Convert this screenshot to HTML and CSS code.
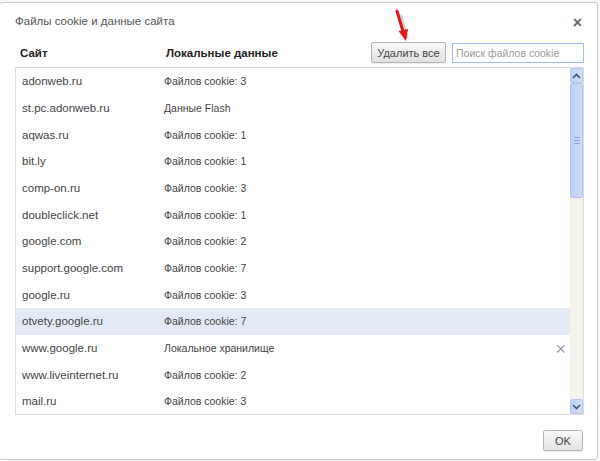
FILE: index.html
```html
<!DOCTYPE html>
<html lang="ru">
<head>
<meta charset="utf-8">
<link rel="stylesheet" href="styles.css">
</head>
<body>
<div class="dialog">
  <div class="titlebar">
    <span class="title">Файлы cookie и данные сайта</span>
    <span class="close">×</span>
  </div>
  <div class="toolbar">
    <span class="h-site">Сайт</span>
    <span class="h-data">Локальные данные</span>
    <button class="btn">Удалить все</button>
    <input class="search" type="text" placeholder="Поиск файлов cookie">
  </div>
  <div class="list">
    <div class="rows">
      <div class="row"><span class="c1">adonweb.ru</span><span class="c2">Файлов cookie: 3</span></div>
      <div class="row"><span class="c1">st.pc.adonweb.ru</span><span class="c2">Данные Flash</span></div>
      <div class="row"><span class="c1">aqwas.ru</span><span class="c2">Файлов cookie: 1</span></div>
      <div class="row"><span class="c1">bit.ly</span><span class="c2">Файлов cookie: 1</span></div>
      <div class="row"><span class="c1">comp-on.ru</span><span class="c2">Файлов cookie: 3</span></div>
      <div class="row"><span class="c1">doubleclick.net</span><span class="c2">Файлов cookie: 1</span></div>
      <div class="row"><span class="c1">google.com</span><span class="c2">Файлов cookie: 2</span></div>
      <div class="row"><span class="c1">support.google.com</span><span class="c2">Файлов cookie: 7</span></div>
      <div class="row"><span class="c1">google.ru</span><span class="c2">Файлов cookie: 3</span></div>
      <div class="row selected"><span class="c1">otvety.google.ru</span><span class="c2">Файлов cookie: 7</span></div>
      <div class="row hover"><span class="c1">www.google.ru</span><span class="c2">Локальное хранилище</span><span class="del">×</span></div>
      <div class="row"><span class="c1">www.liveinternet.ru</span><span class="c2">Файлов cookie: 2</span></div>
      <div class="row"><span class="c1">mail.ru</span><span class="c2">Файлов cookie: 3</span></div>
    </div>
    <div class="scrollbar">
      <div class="sb-btn sb-up">
        <svg width="9" height="6" viewBox="0 0 9 6"><path d="M1 5 L4.5 1.5 L8 5" fill="none" stroke="#3d4f7a" stroke-width="1.6"/></svg>
      </div>
      <div class="sb-thumb"><span class="grip"></span></div>
      <div class="sb-track"></div>
      <div class="sb-btn sb-down">
        <svg width="9" height="6" viewBox="0 0 9 6"><path d="M1 1 L4.5 4.5 L8 1" fill="none" stroke="#3d4f7a" stroke-width="1.6"/></svg>
      </div>
    </div>
  </div>
  <div class="footer">
    <button class="btn ok">OK</button>
  </div>
  <svg class="arrow" width="30" height="42" viewBox="0 0 30 42">
    <path d="M7 6 L14 30" stroke="#888" stroke-width="4" opacity="0.35" transform="translate(2,2)"/>
    <path d="M6 4 L12.5 26" stroke="#e8161a" stroke-width="3" stroke-linecap="round"/>
    <path d="M7.5 24 L17 22 L15 34 Z" fill="#e8161a"/>
  </svg>
</div>
</body>
</html>
```
FILE: styles.css
```css
html, body {
  margin: 0;
  padding: 0;
}
body {
  background: #f7f7f7;
  width: 600px;
  height: 461px;
  overflow: hidden;
  font-family: "Liberation Sans", Arial, sans-serif;
  color: #444;
}
.dialog {
  position: relative;
  box-sizing: border-box;
  width: 599px;
  height: 458px;
  margin: 2px 0 0 -1px;
  background: #fff;
  border: 1px solid #c9c9c9;
  border-radius: 3px;
  padding: 0 13px 0 15px;
  display: flex;
  flex-direction: column;
}
.titlebar {
  height: 39px;
  display: flex;
  align-items: center;
  justify-content: space-between;
}
.title {
  font-size: 11.5px;
  color: #555;
  margin-top: -4px;
}
.close {
  font-size: 16px;
  font-weight: bold;
  color: #666;
  margin-right: 2px;
  margin-top: 0px;
}
.toolbar {
  height: 21px;
  display: flex;
  align-items: center;
}
.h-site, .h-data {
  font-weight: bold;
  font-size: 11.5px;
  color: #222;
}
.h-site {
  margin-left: 5px;
  width: 146px;
}
.h-data {
  flex: 1;
}
.btn {
  font-family: "Liberation Sans", Arial, sans-serif;
  font-size: 11px;
  color: #444;
  height: 21px;
  padding: 0 7px;
  border: 1px solid #b4b4b4;
  border-radius: 2px;
  background: linear-gradient(#f8f8f8, #e2e2e2);
  box-shadow: 0 1px 1px rgba(0,0,0,0.08);
}
.toolbar .btn {
  width: 75px;
  padding: 0;
}
.search {
  box-sizing: border-box;
  margin-left: 6px;
  width: 132px;
  height: 20px;
  border: 1px solid #9fbef5;
  padding: 0 3px;
  font-family: "Liberation Sans", Arial, sans-serif;
  font-size: 10.5px;
  outline: none;
}
.search::placeholder {
  color: #9a9a9a;
}
.list {
  margin-top: 4px;
  height: 346px;
  border: 1px solid #dcdcdc;
  display: flex;
  overflow: hidden;
}
.rows {
  flex: 1;
  overflow: hidden;
}
.row {
  position: relative;
  height: 26.67px;
  display: flex;
  align-items: center;
  color: #444;
}
.row.selected {
  background: #e3eaf6;
}
.c1 {
  width: 142px;
  padding-left: 6px;
  font-size: 11.5px;
}
.c2 {
  flex: 1;
  font-size: 10.5px;
}
.del {
  position: absolute;
  right: 4px;
  top: 4px;
  font-size: 18px;
  color: #a0a0a0;
}
.scrollbar {
  width: 13px;
  display: flex;
  flex-direction: column;
  background: #f4f2ec;
}
.sb-btn {
  box-sizing: border-box;
  height: 15px;
  background: linear-gradient(90deg, #bcd0f6, #d3e0fa);
  border: 1px solid #b4c6ea;
  border-radius: 2px;
  display: flex;
  align-items: center;
  justify-content: center;
}
.sb-thumb {
  box-sizing: border-box;
  height: 115px;
  background: linear-gradient(90deg, #bccff7, #cfdcfa);
  border: 1px solid #aec2ec;
  border-radius: 2px;
  display: flex;
  align-items: center;
  justify-content: center;
}
.grip {
  width: 6px;
  height: 5px;
  border-top: 1px solid #8ea8dc;
  border-bottom: 1px solid #8ea8dc;
  position: relative;
}
.grip::after {
  content: "";
  position: absolute;
  left: 0;
  right: 0;
  top: 2px;
  border-top: 1px solid #8ea8dc;
}
.sb-track {
  flex: 1;
}
.footer {
  flex: 1;
  display: flex;
  justify-content: flex-end;
  align-items: flex-start;
  padding-top: 15px;
}
.btn.ok {
  width: 40px;
  padding: 0;
  margin-right: 1px;
}
.arrow {
  position: absolute;
  left: 391px;
  top: 4px;
}
```
